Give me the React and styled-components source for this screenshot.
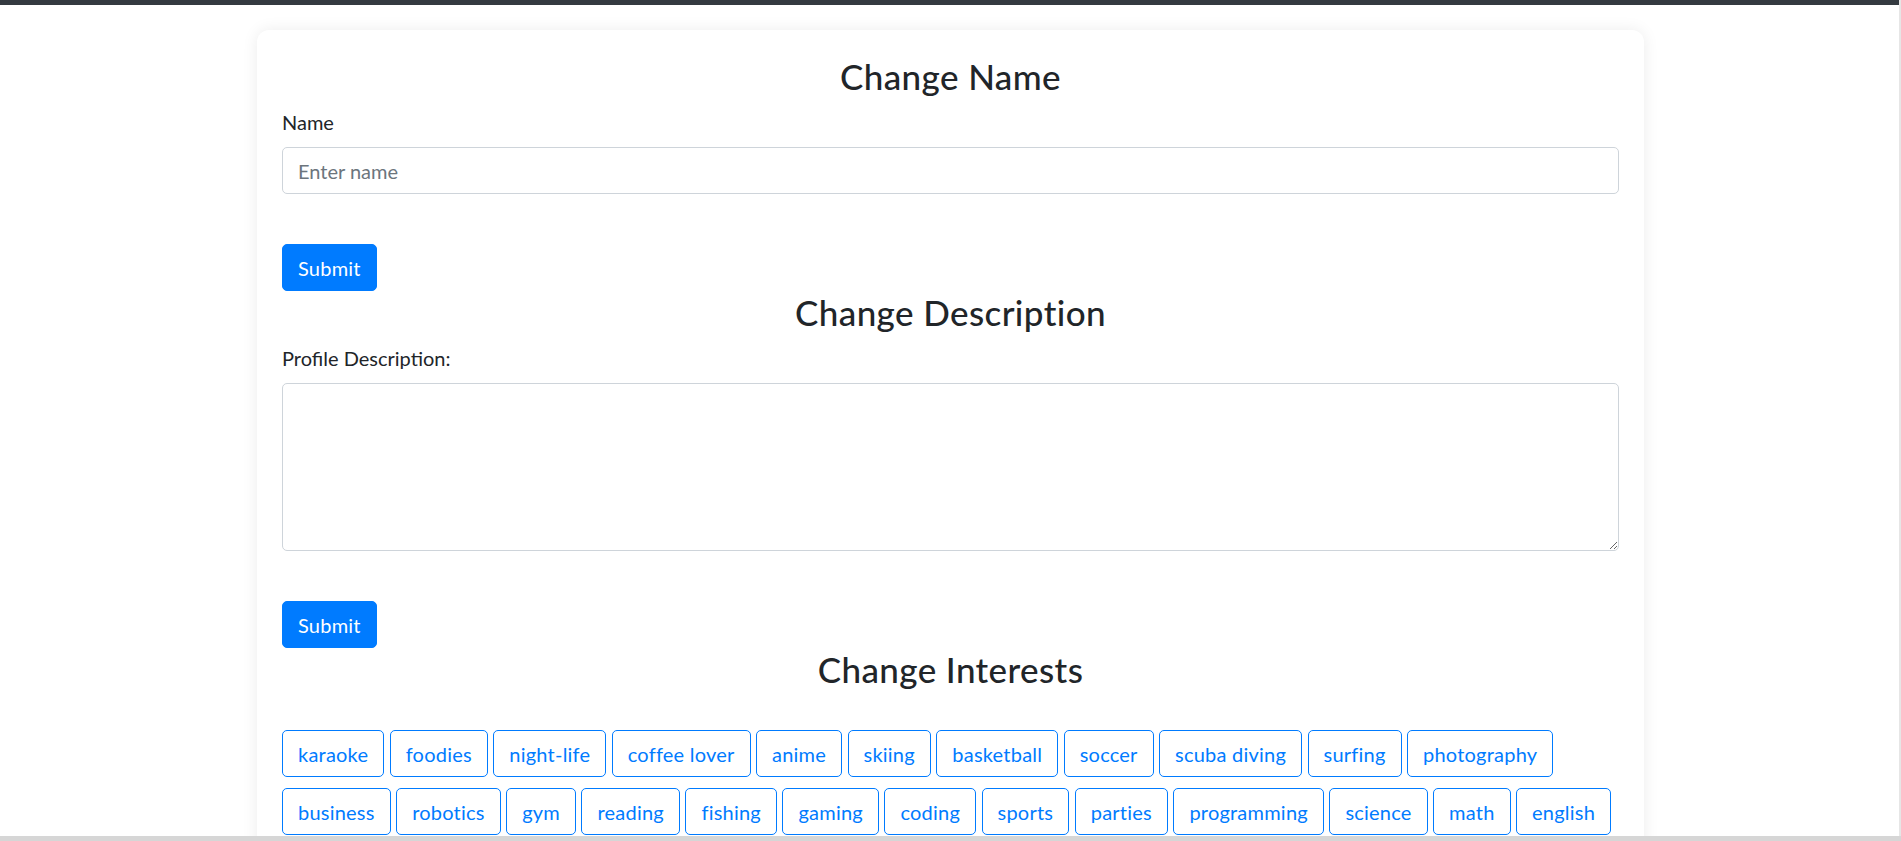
import React, { useState } from "react";
import styled, { createGlobalStyle } from "styled-components";

// PROFILE SETTINGS PAGE - NAME, DESCRIPTION AND INTERESTS

const GlobalStyle = createGlobalStyle`
  html, body {
    margin: 0;
    padding: 0;
    background: #ffffff;
    overflow: hidden;
  }
  body {
    font-family: Lato, "Liberation Sans", sans-serif;
    font-size: 20px;
    line-height: 1.5;
    color: #212529;
  }
  * {
    box-sizing: border-box;
  }
`;

const TopBar = styled.div`
  height: 5px;
  background: #343a40;
`;

const Card = styled.div`
  width: 1387px;
  margin: 25px auto 0;
  padding: 25px;
  background: #ffffff;
  border-radius: 12px;
  box-shadow: 0 0 16px rgba(0, 0, 0, 0.08);
`;

const Title = styled.h3`
  margin: 0 0 10px;
  font-size: 35px;
  font-weight: 500;
  line-height: 1.2;
  letter-spacing: 0.4px;
  text-align: center;
  color: #212529;
`;

const FormGroup = styled.div`
  margin-bottom: ${(p) => p.$space || 50}px;
`;

const Label = styled.label`
  display: block;
  margin-bottom: 10px;
`;

const Input = styled.input`
  display: block;
  width: 100%;
  height: 47px;
  padding: 7px 15px;
  font: inherit;
  color: #495057;
  border: 1px solid #ced4da;
  border-radius: 5px;
  outline: none;

  &::placeholder {
    color: #6c757d;
  }
`;

const TextArea = styled.textarea`
  display: block;
  width: 100%;
  height: 168px;
  padding: 7px 15px;
  font: inherit;
  color: #495057;
  border: 1px solid #ced4da;
  border-radius: 5px;
  outline: none;
`;

const Button = styled.button`
  display: inline-block;
  height: 47px;
  padding: 7px 15px;
  font: inherit;
  line-height: 30px;
  letter-spacing: 0.22px;
  border-radius: 5px;
  cursor: pointer;
  border: 1px solid #007bff;
  color: ${(p) => (p.$outline ? "#007bff" : "#ffffff")};
  background: ${(p) => (p.$outline ? "transparent" : "#007bff")};
`;

const Spacer = styled.div`
  height: 30px;
`;

const TagList = styled.div`
  display: flex;
  flex-wrap: wrap;
  gap: 11px 5.5px;
`;

// browser scrollbars drawn over the page edges
const BottomBar = styled.div`
  position: fixed;
  left: 0;
  right: 0;
  bottom: 0;
  height: 5px;
  background: #d6d6d6;
`;

const SideBar = styled.div`
  position: fixed;
  top: 0;
  right: 0;
  bottom: 0;
  width: 2px;
  background: #e6e6e6;
`;

const interests = [
  "karaoke",
  "foodies",
  "night-life",
  "coffee lover",
  "anime",
  "skiing",
  "basketball",
  "soccer",
  "scuba diving",
  "surfing",
  "photography",
  "business",
  "robotics",
  "gym",
  "reading",
  "fishing",
  "gaming",
  "coding",
  "sports",
  "parties",
  "programming",
  "science",
  "math",
  "english",
];

function App() {
  let [name, setName] = useState("");
  let [description, setDescription] = useState("");
  let [selected, setSelected] = useState([]);

  const toggleInterest = (tag) => {
    setSelected((prev) =>
      prev.includes(tag) ? prev.filter((t) => t !== tag) : [...prev, tag]
    );
  };

  return (
    <>
      <GlobalStyle />
      <TopBar />
      <Card>
        {/* Name */}
        <Title>Change Name</Title>
        <FormGroup>
          <Label htmlFor="name">Name</Label>
          <Input
            id="name"
            type="text"
            placeholder="Enter name"
            value={name}
            onChange={(e) => setName(e.target.value)}
          />
        </FormGroup>
        <Button type="button">Submit</Button>

        {/* Description */}
        <Title>Change Description</Title>
        <FormGroup>
          <Label htmlFor="description">Profile Description:</Label>
          <TextArea
            id="description"
            rows={5}
            value={description}
            onChange={(e) => setDescription(e.target.value)}
          />
        </FormGroup>
        <Button type="button">Submit</Button>

        {/* Interests */}
        <Title>Change Interests</Title>
        <Spacer />
        <TagList>
          {interests.map((tag) => (
            <Button
              key={tag}
              type="button"
              $outline={!selected.includes(tag)}
              onClick={() => toggleInterest(tag)}
            >
              {tag}
            </Button>
          ))}
        </TagList>
      </Card>
      <SideBar />
      <BottomBar />
    </>
  );
}

export default App;
